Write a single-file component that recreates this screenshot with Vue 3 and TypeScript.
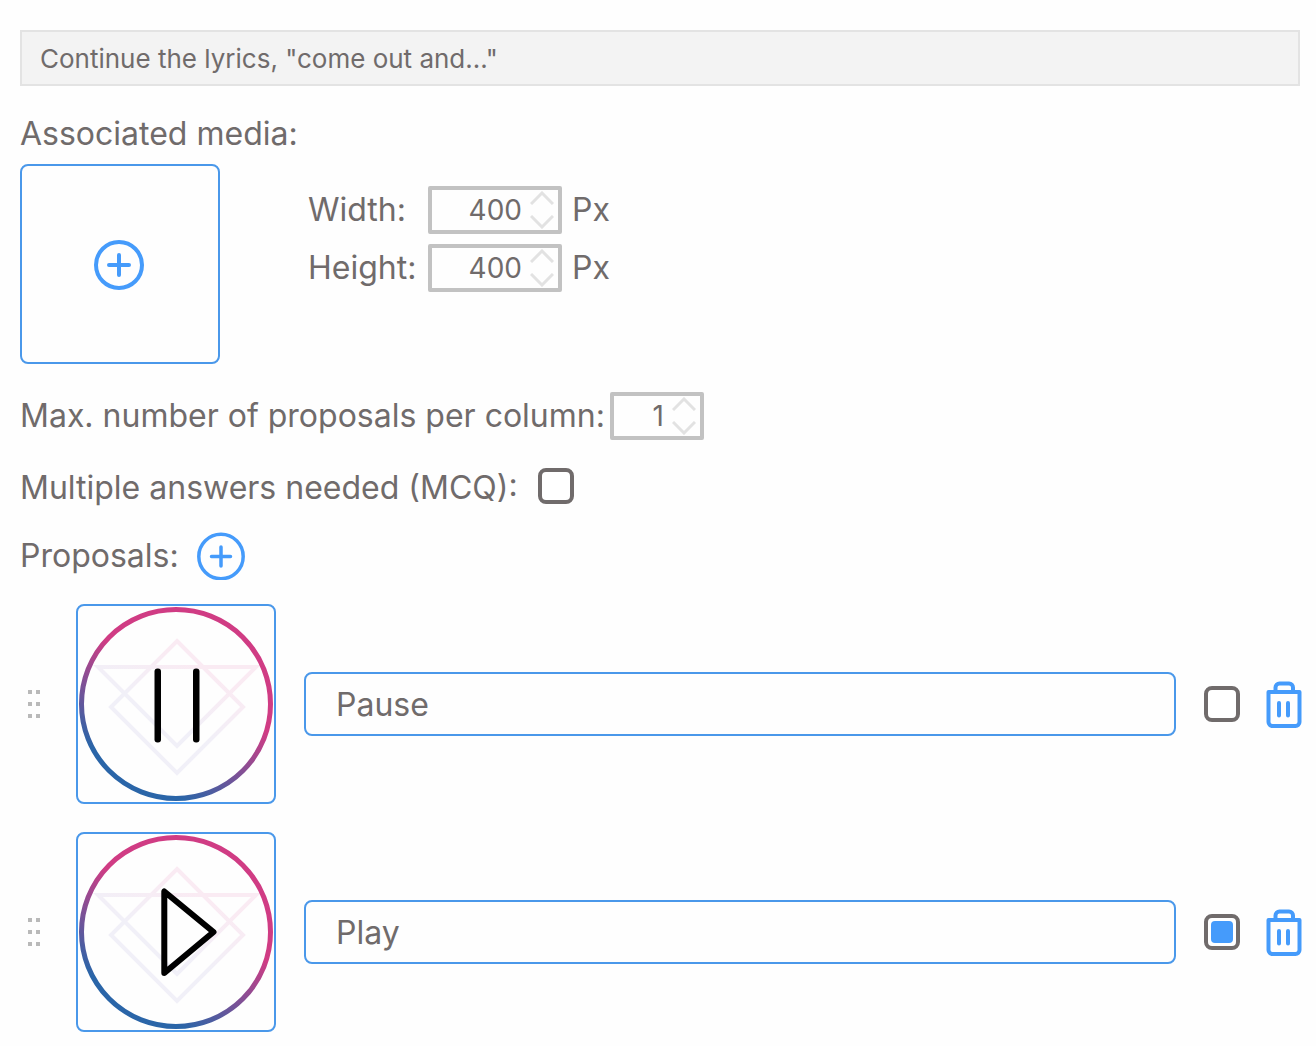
<script setup lang="ts">
import { ref } from 'vue'

interface Proposal {
  id: number
  text: string
  icon: 'pause' | 'play'
  correct: boolean
}

const question = ref('Continue the lyrics, "come out and..."')
const mediaWidth = ref(400)
const mediaHeight = ref(400)
const perColumn = ref(1)
const multiple = ref(false)
const proposals = ref<Proposal[]>([
  { id: 1, text: 'Pause', icon: 'pause', correct: false },
  { id: 2, text: 'Play', icon: 'play', correct: true },
])

function addProposal() {
  const id = Math.max(0, ...proposals.value.map((p) => p.id)) + 1
  proposals.value.push({ id, text: '', icon: 'play', correct: false })
}

function removeProposal(id: number) {
  proposals.value = proposals.value.filter((p) => p.id !== id)
}
</script>

<template>
  <main class="editor">
    <input v-model="question" class="question" type="text" aria-label="Question" />

    <section class="media">
      <h2 class="label">Associated media:</h2>
      <div class="media-row">
        <button class="tile" type="button" aria-label="Add media">
          <svg class="plus-large" viewBox="0 0 50 50" aria-hidden="true">
            <circle cx="24" cy="26" r="23" />
            <path d="M24 16V36M14 26H34" />
          </svg>
        </button>
        <div class="sizes">
          <div class="size">
            <label class="label size-label" for="media-width">Width:</label>
            <span class="stepper">
              <input id="media-width" v-model="mediaWidth" type="number" />
              <span class="arrows">
                <button type="button" aria-label="Increase width" @click="mediaWidth++">
                  <svg viewBox="0 0 24 14"><path d="M1 13L12 2L23 13" /></svg>
                </button>
                <button type="button" aria-label="Decrease width" @click="mediaWidth--">
                  <svg viewBox="0 0 24 14"><path d="M1 1L12 12L23 1" /></svg>
                </button>
              </span>
            </span>
            <span class="label unit">Px</span>
          </div>
          <div class="size">
            <label class="label size-label" for="media-height">Height:</label>
            <span class="stepper">
              <input id="media-height" v-model="mediaHeight" type="number" />
              <span class="arrows">
                <button type="button" aria-label="Increase height" @click="mediaHeight++">
                  <svg viewBox="0 0 24 14"><path d="M1 13L12 2L23 13" /></svg>
                </button>
                <button type="button" aria-label="Decrease height" @click="mediaHeight--">
                  <svg viewBox="0 0 24 14"><path d="M1 1L12 12L23 1" /></svg>
                </button>
              </span>
            </span>
            <span class="label unit">Px</span>
          </div>
        </div>
      </div>
    </section>

    <div class="line line-column">
      <label class="label" for="per-column">Max. number of proposals per column:</label>
      <span class="stepper stepper-small">
        <input id="per-column" v-model="perColumn" type="number" />
        <span class="arrows">
          <button type="button" aria-label="Increase proposals per column" @click="perColumn++">
            <svg viewBox="0 0 24 14"><path d="M1 13L12 2L23 13" /></svg>
          </button>
          <button type="button" aria-label="Decrease proposals per column" @click="perColumn--">
            <svg viewBox="0 0 24 14"><path d="M1 1L12 12L23 1" /></svg>
          </button>
        </span>
      </span>
    </div>

    <div class="line line-multiple">
      <label class="label" for="multiple">Multiple answers needed (MCQ):</label>
      <input id="multiple" v-model="multiple" class="check" type="checkbox" />
    </div>

    <div class="line line-proposals">
      <h2 class="label">Proposals:</h2>
      <button class="add" type="button" aria-label="Add proposal" @click="addProposal">
        <svg viewBox="0 0 48 48" aria-hidden="true">
          <circle cx="24" cy="24.5" r="22.2" />
          <path d="M24 15V34M14.5 24.5H33.5" />
        </svg>
      </button>
    </div>

    <svg class="defs" width="0" height="0" aria-hidden="true">
      <defs>
        <linearGradient id="ring" gradientUnits="userSpaceOnUse" x1="108" y1="80" x2="58" y2="167">
          <stop offset="0" stop-color="#d03c84" />
          <stop offset="1" stop-color="#2a65a8" />
        </linearGradient>
        <linearGradient id="faint" gradientUnits="userSpaceOnUse" x1="118" y1="60" x2="88" y2="112">
          <stop offset="0" stop-color="#faebf3" />
          <stop offset="1" stop-color="#f1f0f8" />
        </linearGradient>
      </defs>
    </svg>

    <ul class="proposals">
      <li v-for="p in proposals" :key="p.id" class="proposal">
        <button class="handle" type="button" aria-label="Move proposal">
          <svg viewBox="0 0 12 28" aria-hidden="true">
            <path d="M0 0h4v4H0zM8 0h4v4H8zM0 12h4v4H0zM8 12h4v4H8zM0 24h4v4H0zM8 24h4v4H8z" />
          </svg>
        </button>
        <button class="tile" type="button" :aria-label="'Change image of ' + p.text">
          <svg class="picture" viewBox="0 0 196 196" aria-hidden="true">
            <g fill="none" stroke="url(#faint)" stroke-width="4">
              <path d="M99 35L165 101L99 167L33 101Z" />
              <path d="M20 61H178L99 140Z" />
            </g>
            <circle cx="98" cy="98" r="94.5" fill="none" stroke="url(#ring)" stroke-width="5" />
            <g v-if="p.icon === 'pause'">
              <rect x="76.5" y="62.5" width="6.5" height="74" rx="3" />
              <rect x="115" y="62.5" width="6.5" height="74" rx="3" />
            </g>
            <path
              v-else
              d="M86.3 57.5V139L135.5 98Z"
              fill="none"
              stroke="#000"
              stroke-width="6"
              stroke-linejoin="round"
            />
          </svg>
        </button>
        <input v-model="p.text" class="answer" type="text" aria-label="Proposal text" />
        <input v-model="p.correct" class="check" type="checkbox" aria-label="Correct answer" />
        <button class="trash" type="button" aria-label="Delete proposal" @click="removeProposal(p.id)">
          <svg viewBox="0 0 36 48" aria-hidden="true">
            <path d="M2.5 12H33.5V42a4 4 0 0 1-4 4H6.5a4 4 0 0 1-4-4Z" stroke-linejoin="round" />
            <path d="M9.5 11V7.5a4 4 0 0 1 4-4H23a4 4 0 0 1 4 4V11" />
            <path d="M13 23V35.5M22 23V35.5" stroke-linecap="round" />
          </svg>
        </button>
      </li>
    </ul>
  </main>
</template>

<style>
body {
  margin: 0;
  background: #fefefe;
}
</style>

<style scoped>
.editor,
.editor * {
  box-sizing: border-box;
}

.editor {
  padding: 30px 14px 14px 20px;
  font-family: Inter, 'Liberation Sans', sans-serif;
  font-weight: 400;
  color: #706b6b;
}

input,
button {
  margin: 0;
  font-family: inherit;
  font-weight: inherit;
  color: inherit;
  outline: none;
}

button {
  padding: 0;
  border: 0;
  background: none;
  cursor: pointer;
}

svg {
  display: block;
}

.label {
  margin: 0;
  font-size: 32px;
  font-weight: inherit;
  line-height: 40px;
  white-space: nowrap;
}

.question {
  display: block;
  width: calc(100% - 2px);
  height: 56px;
  padding: 0 18px;
  border: 2px solid #e3e3e3;
  background: #f3f3f3;
  font-size: 26px;
}

.media {
  margin-top: 28px;
}

.media-row {
  display: flex;
  gap: 88px;
  margin-top: 10px;
}

.tile {
  display: flex;
  flex: none;
  align-items: center;
  justify-content: center;
  width: 200px;
  height: 200px;
  border: 2px solid #4a98ea;
  border-radius: 8px;
}

.plus-large {
  width: 50px;
  height: 50px;
  overflow: visible;
}

.plus-large,
.add svg {
  fill: none;
  stroke: #459bfb;
  stroke-width: 4;
  stroke-linecap: round;
}

.sizes {
  display: flex;
  flex-direction: column;
  gap: 10px;
  padding-top: 22px;
}

.size {
  display: flex;
  align-items: center;
}

.size-label {
  width: 120px;
}

.unit {
  margin-left: 10px;
}

.stepper {
  display: flex;
  width: 134px;
  height: 48px;
  border: 4px solid #c2c2c2;
  border-radius: 2px;
}

.stepper-small {
  width: 94px;
}

.stepper input {
  flex: 1;
  min-width: 0;
  padding: 0;
  border: 0;
  background: none;
  font-size: 28px;
  text-align: right;
  appearance: textfield;
}

.stepper input::-webkit-inner-spin-button {
  display: none;
}

.arrows {
  display: flex;
  flex-direction: column;
  justify-content: space-between;
  width: 36px;
  padding: 1px 4px 1px 8px;
}

.arrows svg {
  width: 24px;
  height: 14px;
  fill: none;
  stroke: #e2e2e2;
  stroke-width: 3;
}

.line {
  display: flex;
  align-items: center;
}

.line-column {
  gap: 5px;
  margin-top: 28px;
}

.line-multiple {
  align-items: flex-start;
  gap: 20px;
  margin-top: 28px;
}

.line-proposals {
  gap: 18px;
  margin-top: 24px;
}

.check {
  display: flex;
  flex: none;
  align-items: center;
  justify-content: center;
  width: 36px;
  height: 36px;
  border: 4px solid #706b6b;
  border-radius: 8px;
  background: #fff;
  appearance: none;
  cursor: pointer;
}

.check:checked::before {
  width: 22px;
  height: 22px;
  border-radius: 4px;
  background: #459bfb;
  content: '';
}

.add svg {
  width: 48px;
  height: 48px;
  stroke-width: 3.5;
}

.defs {
  position: absolute;
}

.proposals {
  display: flex;
  flex-direction: column;
  gap: 28px;
  margin: 24px 0 0;
  padding: 0;
  list-style: none;
}

.proposal {
  display: flex;
  align-items: center;
  padding-left: 8px;
}

.handle {
  margin-right: 36px;
  cursor: grab;
}

.handle svg {
  width: 12px;
  height: 28px;
  fill: #b9b9b9;
}

.picture {
  width: 196px;
  height: 196px;
}

.answer {
  flex: 1;
  min-width: 0;
  height: 64px;
  margin: 0 28px;
  padding: 0 30px;
  border: 2px solid #4a98ea;
  border-radius: 8px;
  background: #fefefe;
  font-size: 32px;
}

.trash {
  margin-left: 26px;
}

.trash svg {
  width: 36px;
  height: 48px;
  fill: none;
  stroke: #459bfb;
  stroke-width: 4;
}
</style>
